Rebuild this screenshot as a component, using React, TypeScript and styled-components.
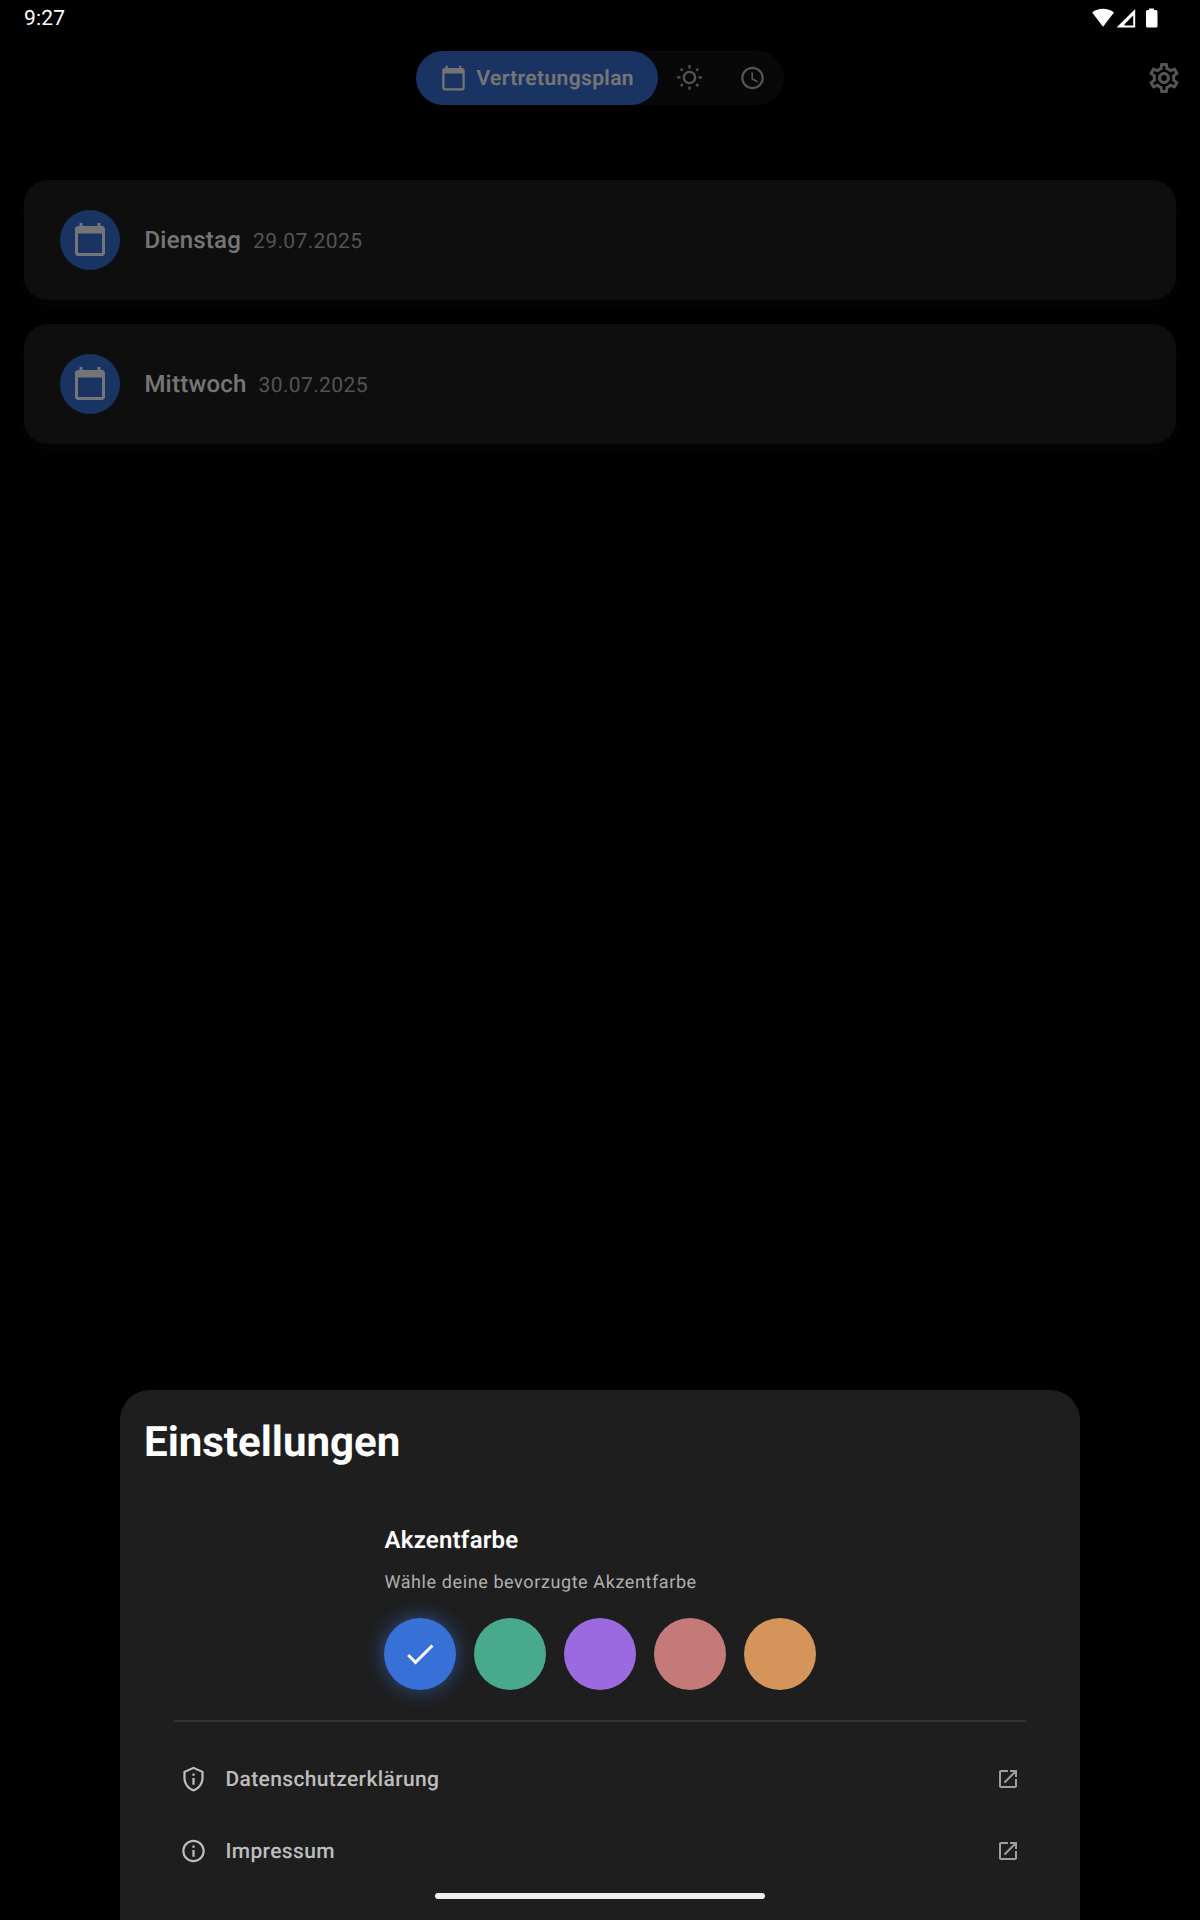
import React from 'react';
import styled, { createGlobalStyle } from 'styled-components';
import {
  MdAccessTime,
  MdCheck,
  MdInfoOutline,
  MdOpenInNew,
  MdOutlinePrivacyTip,
  MdOutlineSettings,
  MdOutlineWbSunny,
} from 'react-icons/md';

const GlobalStyle = createGlobalStyle`
  * { box-sizing: border-box; }
  body {
    margin: 0;
    background: #000;
    font-family: Roboto, "Noto Sans", sans-serif;
    text-rendering: geometricPrecision;
  }
  svg { display: block; flex: none; }
`;

const Screen = styled.div`
  position: relative;
  width: 1200px;
  height: 1920px;
  overflow: hidden;
  background: #000;
  color: #fff;
`;

const StatusBar = styled.header`
  position: absolute;
  inset: 0 0 auto 0;
  z-index: 2;
  height: 36px;
  padding: 0 40px 0 24px;
  display: flex;
  align-items: center;
  justify-content: space-between;
  font-size: 21px;
  line-height: 36px;
  letter-spacing: 0.2px;
`;

const Clock = styled.span`
  padding-top: 2px;
`;

const Page = styled.main`
  padding-top: 36px;
`;

const TopBar = styled.div`
  height: 84px;
  padding: 0 18px;
  display: grid;
  grid-template-columns: 36px 1fr 36px;
  align-items: center;
  justify-items: center;
`;

const Segments = styled.nav`
  grid-column: 2;
  width: 368px;
  height: 54px;
  display: flex;
  border-radius: 27px;
  background: #121212;
`;

const Segment = styled.div<{ $active?: boolean }>`
  width: ${(p) => (p.$active ? 242 : 63)}px;
  padding-left: ${(p) => (p.$active ? 24 : 0)}px;
  display: flex;
  align-items: center;
  justify-content: ${(p) => (p.$active ? 'flex-start' : 'center')};
  gap: 9px;
  border-radius: 27px;
  background: ${(p) => (p.$active ? '#3770d6' : 'transparent')};
  color: ${(p) => (p.$active ? '#fff' : '#b8b8b8')};
  font-size: 21px;
  font-weight: 600;
  letter-spacing: 0.375px;

  svg { transform: translateY(-0.5px); }
`;

const SegmentLabel = styled.span`
  padding: 2px 0 0 0.5px;
`;

const DayList = styled.section`
  padding: 60px 24px 0;
  display: flex;
  flex-direction: column;
  gap: 24px;
`;

const DayCard = styled.article`
  height: 120px;
  padding: 0 36px;
  display: flex;
  align-items: center;
  border-radius: 24px;
  background: #1f1f1f;
  box-shadow: 0 6px 18px rgba(55, 112, 214, 0.12);
`;

const DayBadge = styled.div`
  width: 60px;
  height: 60px;
  display: grid;
  place-items: center;
  border-radius: 50%;
  background: #3770d6;

  svg { transform: translateY(-0.4px); }
`;

const DayTitle = styled.div`
  margin-left: 24.4px;
  display: flex;
  align-items: baseline;
  gap: 12px;
`;

const DayName = styled.span`
  font-size: 24px;
  font-weight: 500;
  letter-spacing: 0.225px;
`;

const DayDate = styled.span`
  font-size: 21px;
  letter-spacing: 0.375px;
  color: #b3b3b3;
`;

const Backdrop = styled.div`
  position: absolute;
  inset: 0;
  display: flex;
  align-items: flex-end;
  justify-content: center;
  background: rgba(0, 0, 0, 0.54);
`;

const Sheet = styled.section`
  position: relative;
  width: 960px;
  height: 530px;
  padding: 26px 24px 24px;
  border-radius: 30px 30px 0 0;
  background: #1e1e1e;
`;

const SheetTitle = styled.h1`
  margin: 0;
  font-size: 42px;
  line-height: 54px;
  font-weight: 700;
`;

const AccentSection = styled.div`
  width: 432px;
  margin: 55px auto 0;
`;

const AccentTitle = styled.h2`
  margin: 0;
  padding-left: 0.5px;
  font-size: 24px;
  line-height: 30px;
  font-weight: 600;
  letter-spacing: 0.225px;
`;

const AccentHint = styled.p`
  margin: 15px 0 22px;
  padding-left: 0.4px;
  font-size: 18px;
  line-height: 26px;
  letter-spacing: 0.6px;
  color: #b0b0b0;
`;

const Swatches = styled.div`
  display: flex;
  gap: 18px;
`;

const Swatch = styled.div<{ $color: string; $selected?: boolean }>`
  width: 72px;
  height: 72px;
  display: grid;
  place-items: center;
  border-radius: 50%;
  background: ${(p) => p.$color};
  box-shadow: ${(p) => (p.$selected ? '0 0 18px 3px rgba(55, 112, 214, 0.45)' : 'none')};
`;

const Divider = styled.div`
  height: 2px;
  margin: 30px 30px 21px;
  background: #333;
`;

const LinkRow = styled.div`
  height: 72px;
  margin: 0 30px;
  padding: 0 6px;
  display: flex;
  align-items: center;
  color: #bdbdbd;
  font-size: 21px;
  font-weight: 500;

  svg:first-child { transform: translateY(-0.5px); }
`;

const LinkLabel = styled.span`
  flex: 1;
  margin-left: 18.4px;
  padding-top: 2px;
  letter-spacing: 0.375px;
`;

const NavHandle = styled.div`
  position: absolute;
  left: 315px;
  bottom: 21px;
  width: 330px;
  height: 6px;
  border-radius: 3px;
  background: #f1eeee;
`;

const days = [
  { name: 'Dienstag', date: '29.07.2025' },
  { name: 'Mittwoch', date: '30.07.2025' },
];

const accents = ['#3770d6', '#48a98c', '#9c6ae0', '#c57a7a', '#d4945a'];

const links = [
  { label: 'Datenschutzerklärung', Icon: MdOutlinePrivacyTip },
  { label: 'Impressum', Icon: MdInfoOutline },
];

const CalendarIcon = ({ size }: { size: number }) => (
  <svg width={size} height={size} viewBox="0 0 24 24" fill="currentColor">
    <path d="M20 3h-1V1h-2v2H7V1H5v2H4c-1.1 0-2 .9-2 2v16c0 1.1.9 2 2 2h16c1.1 0 2-.9 2-2V5c0-1.1-.9-2-2-2zm0 18H4V8h16v13z" />
  </svg>
);

const StatusIcons = () => (
  <svg width="68" height="20" viewBox="0 0 68 20" fill="#fff">
    <path d="M0.2 4.6C6 -0.4 16 -0.4 22 4.6L11 18.7Z" />
    <path fillRule="evenodd" d="M24.5 19.5L43.2 1V19.5ZM32.5 17.5H41.2V7.5L32.5 16.2Z" />
    <path d="M57 2V0.5H62V2H64Q65.5 2 65.5 3.5V18Q65.5 19.5 64 19.5H55.5Q54 19.5 54 18V3.5Q54 2 55.5 2Z" />
  </svg>
);

export default function App() {
  return (
    <>
      <GlobalStyle />
      <Screen>
        <StatusBar>
          <Clock>9:27</Clock>
          <StatusIcons />
        </StatusBar>
        <Page>
          <TopBar>
            <Segments>
              <Segment $active>
                <CalendarIcon size={27} />
                <SegmentLabel>Vertretungsplan</SegmentLabel>
              </Segment>
              <Segment>
                <MdOutlineWbSunny size={27} />
              </Segment>
              <Segment>
                <MdAccessTime size={27} />
              </Segment>
            </Segments>
            <MdOutlineSettings size={36} color="#b8b8b8" />
          </TopBar>
          <DayList>
            {days.map((day) => (
              <DayCard key={day.name}>
                <DayBadge>
                  <CalendarIcon size={36} />
                </DayBadge>
                <DayTitle>
                  <DayName>{day.name}</DayName>
                  <DayDate>{day.date}</DayDate>
                </DayTitle>
              </DayCard>
            ))}
          </DayList>
        </Page>
        <Backdrop>
          <Sheet>
            <SheetTitle>Einstellungen</SheetTitle>
            <AccentSection>
              <AccentTitle>Akzentfarbe</AccentTitle>
              <AccentHint>Wähle deine bevorzugte Akzentfarbe</AccentHint>
              <Swatches>
                {accents.map((color, i) => (
                  <Swatch key={color} $color={color} $selected={i === 0}>
                    {i === 0 && <MdCheck size={36} />}
                  </Swatch>
                ))}
              </Swatches>
            </AccentSection>
            <Divider />
            {links.map(({ label, Icon }) => (
              <LinkRow key={label}>
                <Icon size={27} />
                <LinkLabel>{label}</LinkLabel>
                <MdOpenInNew size={24} color="#9e9e9e" />
              </LinkRow>
            ))}
            <NavHandle />
          </Sheet>
        </Backdrop>
      </Screen>
    </>
  );
}
